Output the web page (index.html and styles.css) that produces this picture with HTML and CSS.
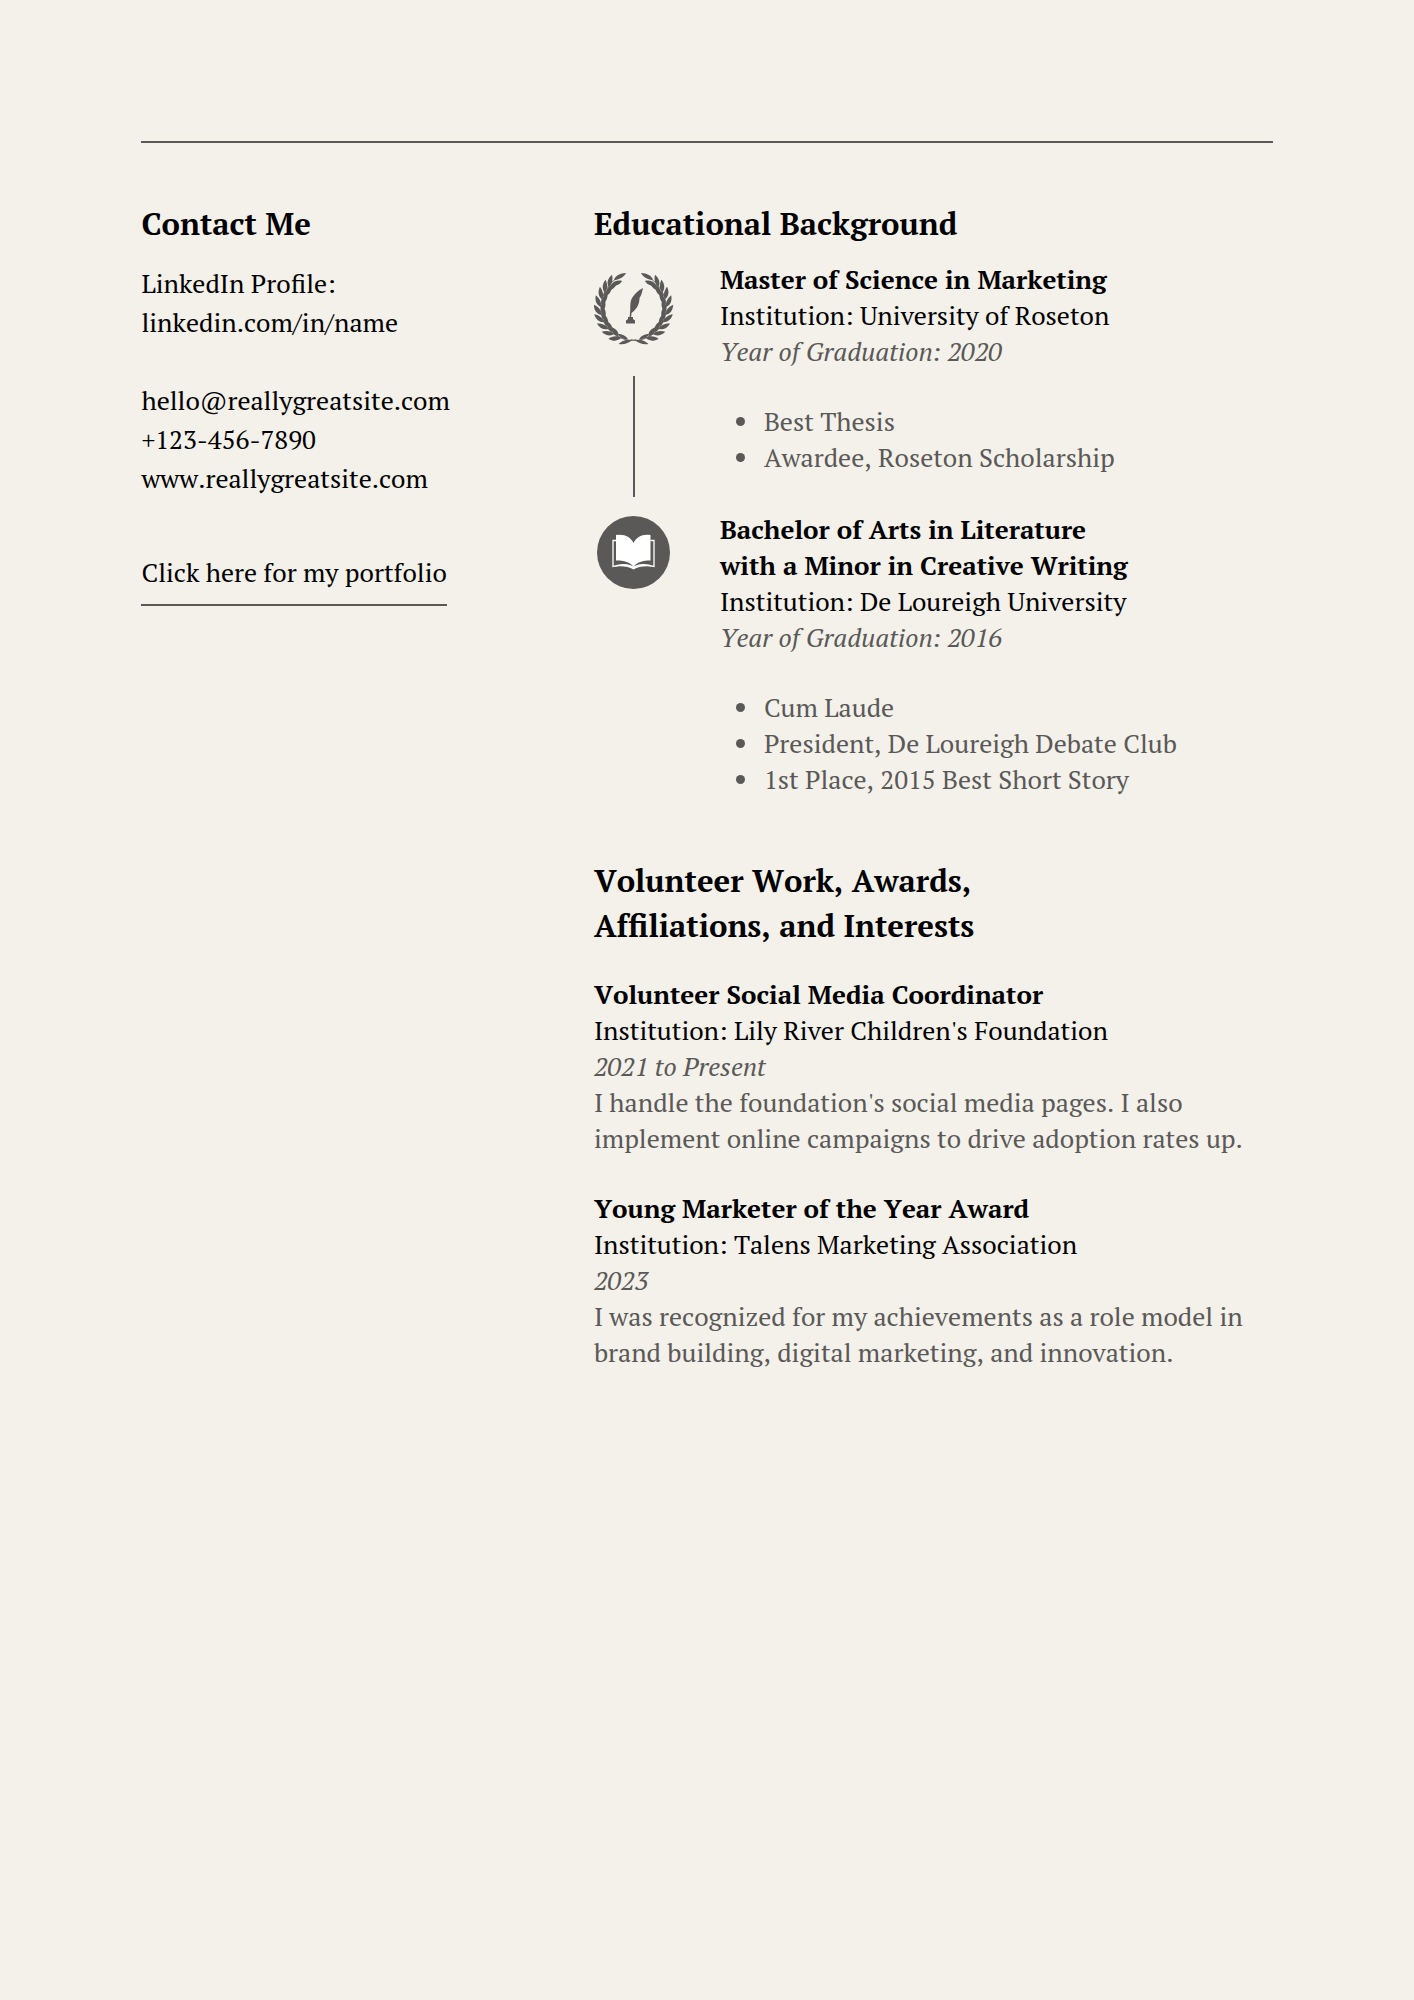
FILE: index.html
```html
<!DOCTYPE html>
<html lang="en">
<head>
<meta charset="utf-8">
<meta name="viewport" content="width=device-width, initial-scale=1">
<title>Resume</title>
<link rel="stylesheet" href="styles.css">
</head>
<body>
<main class="page">
  <aside class="contact">
    <h2 class="heading">Contact Me</h2>
    <address class="contact-body">
      <p>LinkedIn Profile:<br><a href="https://linkedin.com/in/name">linkedin.com/in/name</a></p>
      <p><a href="mailto:hello@reallygreatsite.com">hello@reallygreatsite.com</a><br><a href="tel:+1234567890">+123-456-7890</a><br><a href="https://www.reallygreatsite.com">www.reallygreatsite.com</a></p>
    </address>
    <a class="portfolio" href="#portfolio">Click here for my portfolio</a>
  </aside>

  <div class="main">
    <section class="education">
      <h2 class="heading">Educational Background</h2>
      <article class="degree">
        <div class="rail rail-first">
          <svg class="wreath" viewBox="8 11 80 76" aria-hidden="true">
            <defs>
              <g id="pair">
                <path d="M-32 3C-36 2-39-2-38.500-8C-35-6-31.500-2-32 3Z"/>
                <path d="M-32 0C-28.500-1-26-5-27-11C-30.500-9-33-5-32 0Z"/>
              </g>
              <g id="branch">
                <path d="M3 31.500C-1 33-4 33-8 31.500C-23 27-32 15-32 0C-32-14-25-25-15-30" fill="none" stroke="#5a5958" stroke-width="0.800"/>
                <path d="M-1 32C-4 35-9 37-14.500 36C-12 33.500-7 31-1 32Z"/>
                <path d="M-5 31.500C-6 28.500-10 26-15 26C-14 29-10 31.500-5 31.500Z"/>
                <use href="#pair" transform="rotate(-63)"/>
                <use href="#pair" transform="rotate(-49)"/>
                <use href="#pair" transform="rotate(-35)"/>
                <use href="#pair" transform="rotate(-21)"/>
                <use href="#pair" transform="rotate(-7)"/>
                <use href="#pair" transform="rotate(7)"/>
                <use href="#pair" transform="rotate(21)"/>
                <use href="#pair" transform="rotate(34)"/>
                <use href="#pair" transform="rotate(46)"/>
                <path d="M-19-28C-18-32-13-35-7-35C-9-31-14-28-19-28Z"/>
              </g>
            </defs>
            <g fill="#5a5958">
              <use href="#branch" transform="translate(47 48)"/>
              <use href="#branch" transform="translate(48 48) scale(-1 1)"/>
              <path d="M57 28C51 31 45 37 44.500 43C44 47 44.500 50 44 53L43.500 58H45L45.500 53C51 49 53.500 44 53.500 38C56 35 56 31 57 28Z"/>
              <path d="M42 57H47V59L49 60.500V63.500H40V60.500L42 59Z"/>
            </g>
          </svg>
          <span class="connector"></span>
        </div>
        <div class="degree-body">
          <h3 class="title">Master of Science in Marketing</h3>
          <p>Institution: University of Roseton</p>
          <p class="date">Year of Graduation: 2020</p>
          <ul class="honors">
            <li>Best Thesis</li>
            <li>Awardee, Roseton Scholarship</li>
          </ul>
        </div>
      </article>
      <article class="degree">
        <div class="rail">
          <svg class="book" viewBox="13 16 73 73" aria-hidden="true">
            <circle cx="49.500" cy="52.500" r="36.500" fill="#5a5958"/>
            <path d="M32 35C40 33.500 47 37 49.500 43C52 37 59 33.500 66.500 35V60.500C59 60.500 52.500 62 49.500 67C46.500 62 40 60.500 32 60.500Z" fill="#fff"/>
            <path d="M32 40.500H29V66.500C37 64 45 64.500 49.500 68C54 64.500 62 64 70 66.500V40.500H66.500" fill="none" stroke="#fff" stroke-width="1.300"/>
            <path d="M29 67C38 63.500 45 64 49.500 66.500C54 64 61 63.500 70 67C62 65.500 55 66.500 49.500 69.500C44 66.500 37 65.500 29 67Z" fill="#fff"/>
          </svg>
        </div>
        <div class="degree-body">
          <h3 class="title">Bachelor of Arts in Literature<br>with a Minor in Creative Writing</h3>
          <p>Institution: De Loureigh University</p>
          <p class="date">Year of Graduation: 2016</p>
          <ul class="honors">
            <li>Cum Laude</li>
            <li>President, De Loureigh Debate Club</li>
            <li>1st Place, 2015 Best Short Story</li>
          </ul>
        </div>
      </article>
    </section>

    <section class="volunteer">
      <h2 class="heading">Volunteer Work, Awards,<br>Affiliations, and Interests</h2>
      <article class="entry">
        <h3 class="title">Volunteer Social Media Coordinator</h3>
        <p>Institution: Lily River Children's Foundation</p>
        <p class="date">2021 to Present</p>
        <p class="summary">I handle the foundation's social media pages. I also<br>implement online campaigns to drive adoption rates up.</p>
      </article>
      <article class="entry">
        <h3 class="title">Young Marketer of the Year Award</h3>
        <p>Institution: Talens Marketing Association</p>
        <p class="date">2023</p>
        <p class="summary">I was recognized for my achievements as a role model in<br>brand building, digital marketing, and innovation.</p>
      </article>
    </section>
  </div>
</main>
</body>
</html>
```
FILE: styles.css
```css
* {
  box-sizing: border-box;
}

body {
  margin: 0;
  background: #f4f1ea;
  color: #000;
  font: 26px/36px "PT Serif", "Liberation Serif", serif;
  font-kerning: none;
}

h2, h3, p, ul {
  margin: 0;
}

a {
  color: inherit;
  text-decoration: none;
}

.page {
  display: grid;
  grid-template-columns: 2fr 3fr;
  margin: 141px 10%;
  padding-top: 58px;
  border-top: 2px solid #5a5958;
}

.heading {
  font-size: 31px;
  line-height: 45px;
}

.contact-body {
  display: grid;
  gap: 39px;
  margin-top: 18px;
  font-style: normal;
  line-height: 39px;
}

.portfolio {
  display: inline-block;
  margin-top: 55px;
  padding-bottom: 12px;
  border-bottom: 2px solid #5a5958;
  line-height: 39px;
}

.education .heading {
  margin-bottom: 15px;
}

.degree {
  display: grid;
  grid-template-columns: 80px 1fr;
  column-gap: 46px;
}

.rail {
  display: flex;
  flex-direction: column;
  align-items: center;
  padding-top: 5px;
}

.rail-first {
  padding-top: 10px;
}

.wreath {
  width: 80px;
  height: 76px;
}

.book {
  width: 73px;
  height: 73px;
}

.connector {
  flex: 1;
  width: 2px;
  margin: 29px 0 14px;
  background: #5a5958;
}

.title {
  font-size: 26px;
}

.date, .summary, .honors {
  color: #5a5958;
}

.date {
  font-style: italic;
}

.honors {
  margin: 34px 0 36px;
  padding-left: 41px;
}

.honors li {
  padding-left: 3px;
}

.volunteer .heading {
  margin-top: 25px;
}

.entry {
  margin-top: 28px;
}

.entry + .entry {
  margin-top: 34px;
}

@media (max-width: 1000px) {
  .page {
    grid-template-columns: 1fr;
    row-gap: 52px;
  }
}
```
